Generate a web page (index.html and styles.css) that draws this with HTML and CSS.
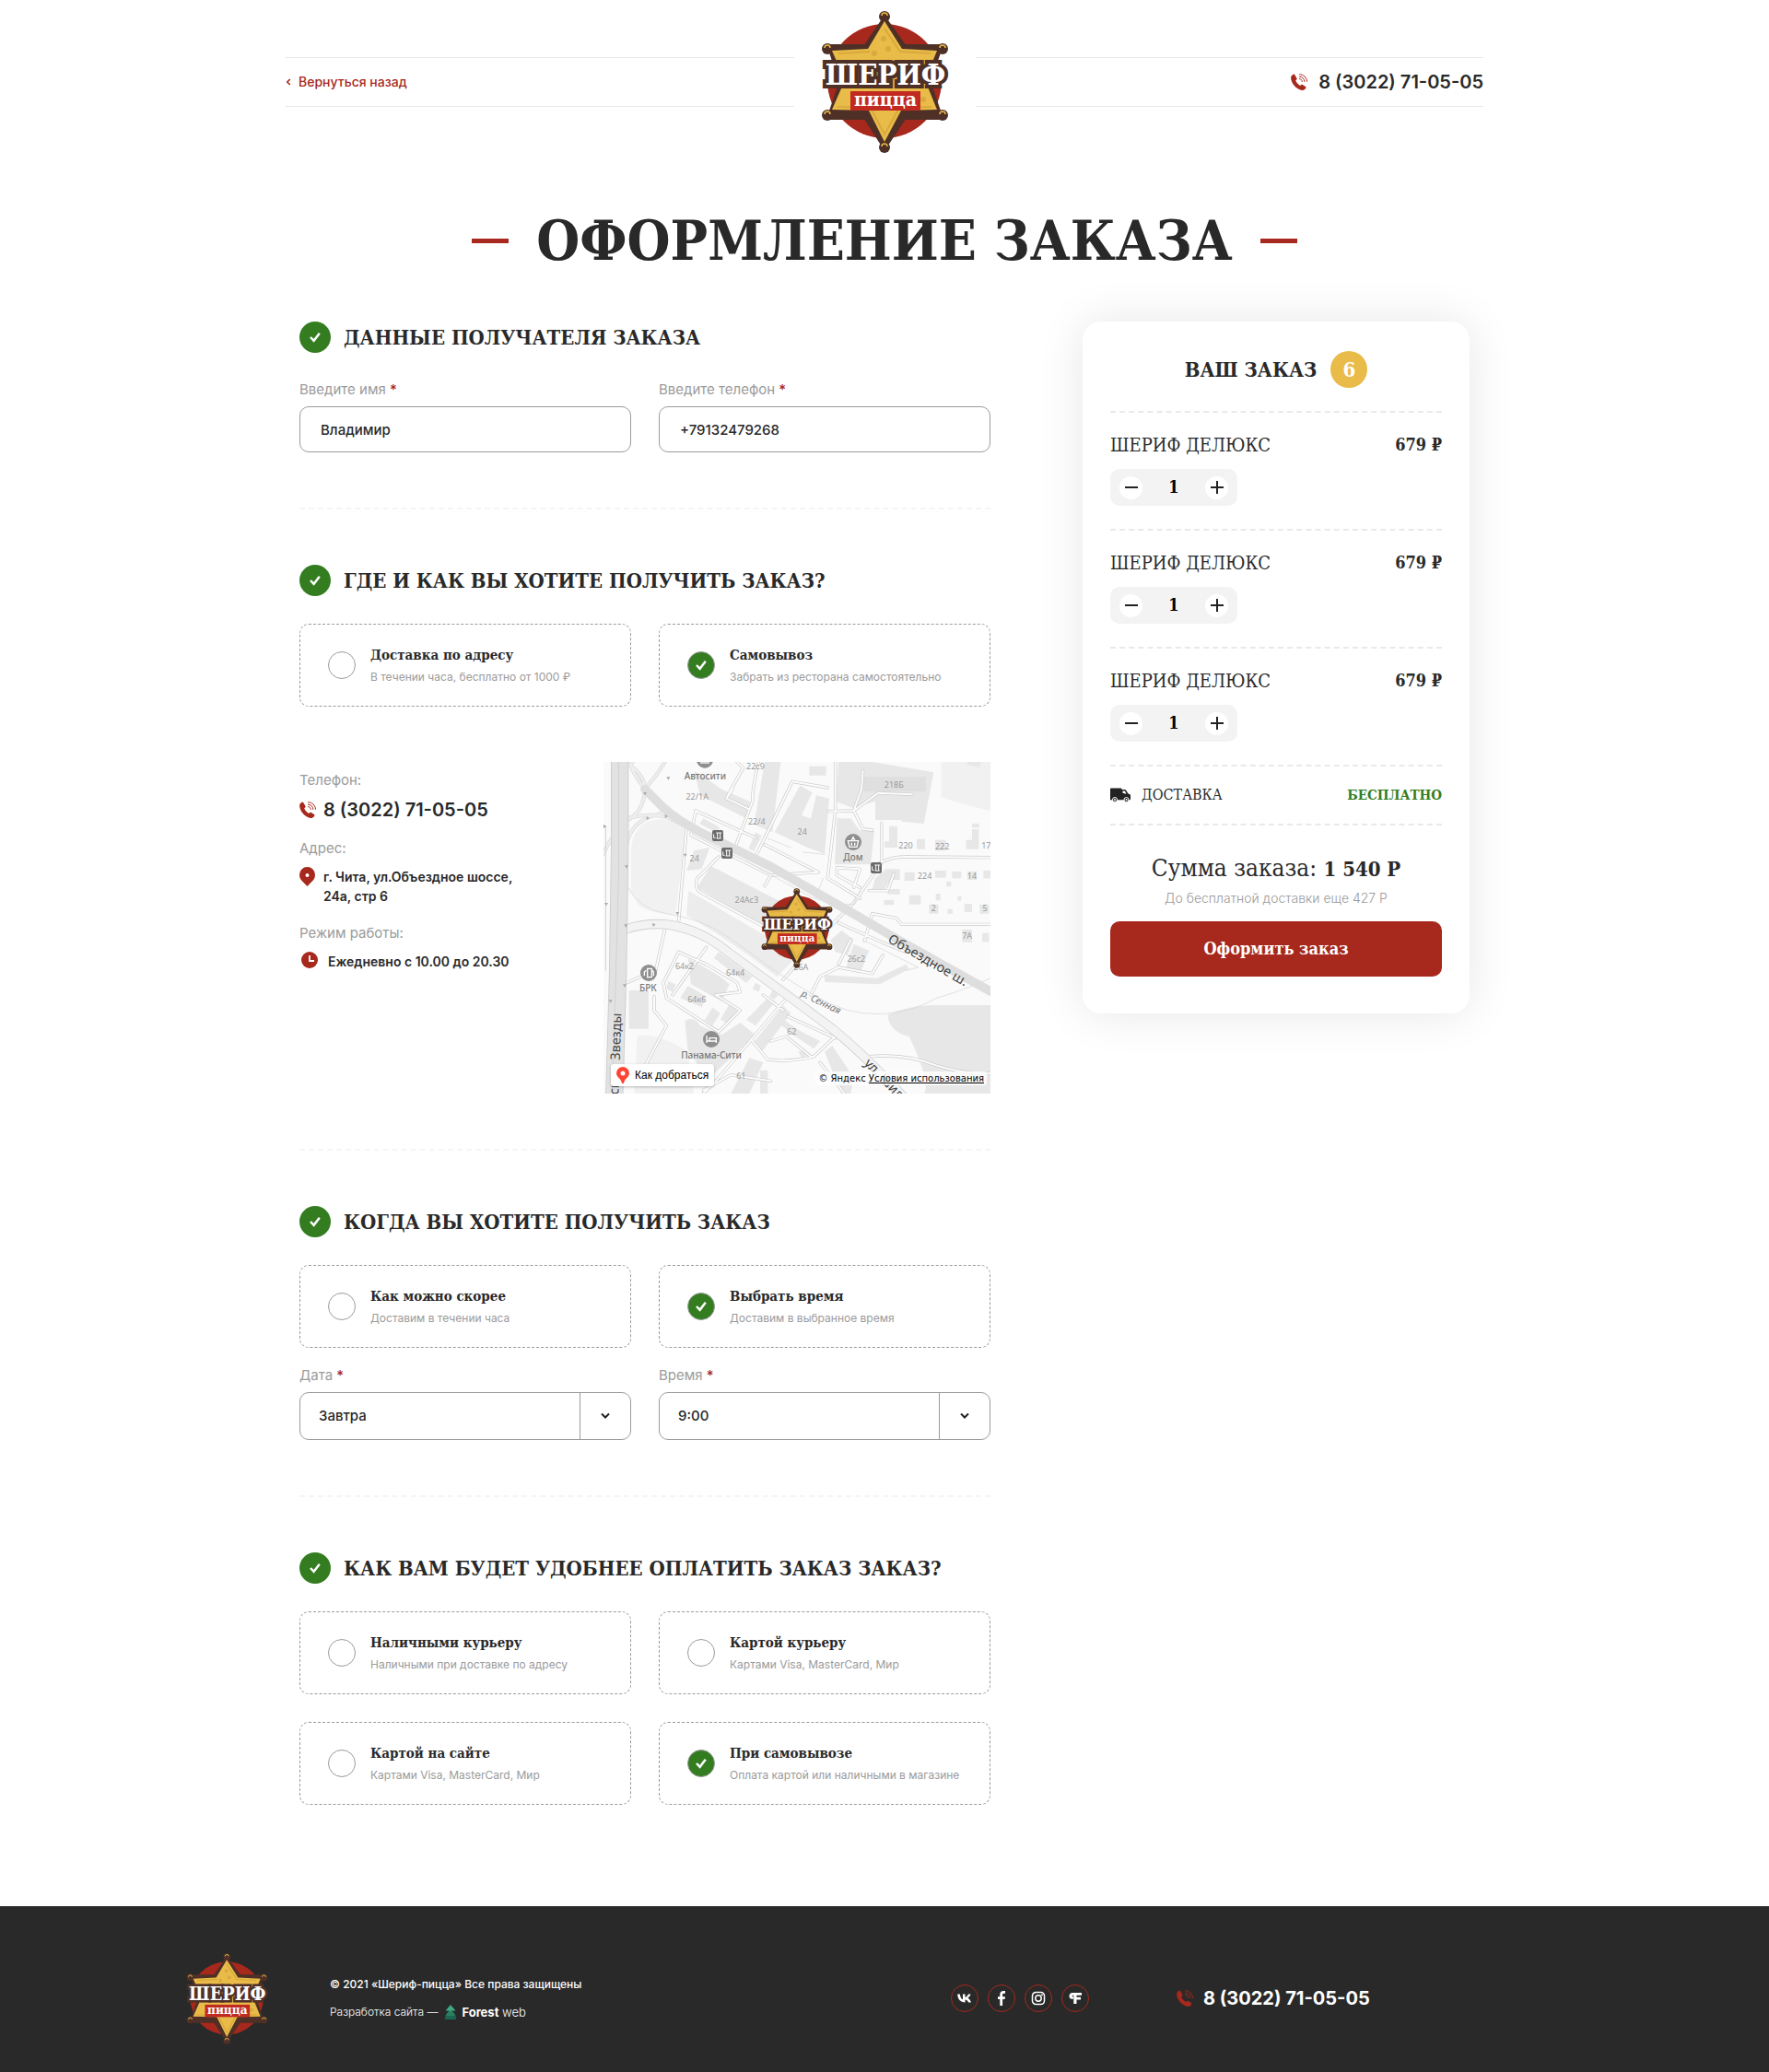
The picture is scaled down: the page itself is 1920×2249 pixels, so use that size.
FILE: index.html
```html
<!DOCTYPE html>
<html lang="ru">
<head>
<meta charset="utf-8">
<meta name="viewport" content="width=device-width, initial-scale=1">
<title>Оформление заказа — Шериф-пицца</title>
<link rel="stylesheet" href="styles.css">
</head>
<body>

<svg class="sprite" aria-hidden="true">
  <symbol id="logo" viewBox="0 0 139 154">
    <circle cx="69" cy="76" r="62" fill="#a7281c"/>
    <g fill="#4f3026">
      <path d="M69 6 91 37 132 37 118 76 132 117 91 117 69 150 48 117 7 117 21 76 7 37 48 37Z" stroke="#4f3026" stroke-width="2" stroke-linejoin="round"/>
      <circle cx="69" cy="6" r="6"/><circle cx="69" cy="148" r="6"/>
      <circle cx="7" cy="41" r="6"/><circle cx="132" cy="41" r="6"/>
      <circle cx="7" cy="113" r="6"/><circle cx="132" cy="113" r="6"/>
    </g>
    <path d="M69 11 88 41 126 43 113 75 126 107 87 108 69 142 52 108 12 107 26 75 12 43 51 41Z" fill="#e9bb48"/>
    <path d="M69 19 86 44 119 46M53 44 19 46M18 104 54 105 69 134 85 105 120 104" fill="none" stroke="#d8a93c" stroke-width="2"/>
    <g fill="#d8a93c"><circle cx="68" cy="30" r="3"/><circle cx="73" cy="41" r="3"/><circle cx="58" cy="46" r="3"/><circle cx="111" cy="96" r="3"/></g>
    <g fill="none" stroke="#e9bb48" stroke-width="1.5">
      <path d="M66 5a3 3 0 0 1 6 0M66 147a3 3 0 0 1 6 0M4 40a3 3 0 0 1 6 0M129 40a3 3 0 0 1 6 0M4 112a3 3 0 0 1 6 0M129 112a3 3 0 0 1 6 0"/>
    </g>
    <text class="logo-name" x="70" y="80" text-anchor="middle">ШЕРИФ</text>
    <rect x="32" y="87" width="76" height="21" fill="#c12a20"/>
    <text class="logo-kind" x="70" y="103" text-anchor="middle">пицца</text>
  </symbol>
  <symbol id="phone" viewBox="0 0 18 18">
    <path fill="#a7281c" d="M4.300 1.200 6.500 5c.3.600.1 1.200-.4 1.600l-.9.700c.9 2.300 2.600 4.200 4.900 5.600l1-.7c.5-.4 1.100-.5 1.700-.1l3.200 2c.5.400.7 1 .3 1.500-1.200 1.900-3 2.900-5.100 2.200C5.200 16 .7 10.700.1 4.800 0 3 .8 1.700 2.700.7c.6-.3 1.300-.1 1.600.5z"/>
    <path fill="none" stroke="#a7281c" stroke-width="1" stroke-linecap="round" d="M9.500.8c4.200-.2 7.800 3.200 8 7.500M9.500 3.200c3 0 5.200 2.200 5.400 5.300M9.500 5.600c1.700.1 2.700 1.200 2.800 2.900"/>
  </symbol>
  <symbol id="check" viewBox="0 0 12 12">
    <path fill="none" stroke="#fff" stroke-width="2.500" d="M1 6 4.600 9.800 10.800 1.800"/>
  </symbol>
</svg>

<header class="header">
  <div class="header__side">
    <a class="back" href="#"><svg width="6" height="8" viewBox="0 0 6 8" aria-hidden="true"><path d="M4.800 1 1.800 4l3 3" fill="none" stroke="currentColor" stroke-width="1.600"/></svg>Вернуться назад</a>
  </div>
  <a class="header__logo" href="#" aria-label="Шериф-пицца"><svg width="139" height="154"><use href="#logo"/></svg></a>
  <div class="header__side header__side--right">
    <a class="phone phone--header" href="tel:+73022710505"><svg width="18" height="18" aria-hidden="true"><use href="#phone"/></svg>8 (3022) 71-05-05</a>
  </div>
</header>

<main>
  <h1 class="title">Оформление заказа</h1>

  <form class="checkout">
    <div class="steps">
      <section class="step">
        <h2 class="step__title"><span class="step__mark"><svg width="12" height="12" aria-hidden="true"><use href="#check"/></svg></span>Данные получателя заказа</h2>
        <div class="pair">
          <div class="field">
            <label for="name">Введите имя <b>*</b></label>
            <input id="name" type="text" value="Владимир">
          </div>
          <div class="field">
            <label for="tel">Введите телефон <b>*</b></label>
            <input id="tel" type="tel" value="+79132479268">
          </div>
        </div>
      </section>

      <section class="step">
        <h2 class="step__title"><span class="step__mark"><svg width="12" height="12" aria-hidden="true"><use href="#check"/></svg></span>Где и как вы хотите получить заказ?</h2>
        <div class="pair">
          <label class="option"><span class="radio"><input type="radio" name="way"><svg width="12" height="12" aria-hidden="true"><use href="#check"/></svg></span><span class="option__text"><strong>Доставка по адресу</strong><small>В течении часа, бесплатно от 1000 ₽</small></span></label>
          <label class="option"><span class="radio"><input type="radio" name="way" checked><svg width="12" height="12" aria-hidden="true"><use href="#check"/></svg></span><span class="option__text"><strong>Самовывоз</strong><small>Забрать из ресторана самостоятельно</small></span></label>
        </div>

        <div class="pickup">
          <dl class="contacts">
            <dt>Телефон:</dt>
            <dd><a class="phone" href="tel:+73022710505"><svg width="18" height="18" aria-hidden="true"><use href="#phone"/></svg>8 (3022) 71-05-05</a></dd>
            <dt>Адрес:</dt>
            <dd class="contacts__row"><svg width="18" height="21" viewBox="0 0 18 21" aria-hidden="true"><path fill="#a7281c" d="M8.500 0a8.500 8.500 0 0 1 8.500 8.500c0 3.600-1.700 5.700-3.600 7.400L8.500 21l-4.900-5.100C1.700 14.200 0 12.100 0 8.500A8.500 8.500 0 0 1 8.500 0z"/><circle cx="8.500" cy="9" r="2" fill="#fff"/></svg><span>г. Чита, ул.Объездное шоссе,<br>24а, стр 6</span></dd>
            <dt>Режим работы:</dt>
            <dd class="contacts__row contacts__row--time"><svg width="18" height="18" viewBox="0 0 18 18" aria-hidden="true"><circle cx="9" cy="9" r="9" fill="#a7281c"/><path d="M9 4v6h5" fill="none" stroke="#fff" stroke-width="1.800"/></svg><span>Ежедневно с 10.00 до 20.30</span></dd>
          </dl>

          <div class="map">
            <svg class="map__canvas" viewBox="15 21 1260 1080" role="img" aria-label="Карта">
              <rect x="15" y="21" width="1260" height="1080" fill="#fafafa"/>
              <g fill="#f1f1f1">
                <path d="M105 300Q120 210 200 208 265 210 282 250L250 515Q180 520 130 490L105 440Z"/>
                <path d="M1115 21H1275V180Q1180 160 1115 135Z"/>
                <path d="M125 912Q200 905 290 965L310 1101H115Z"/>
                <path d="M292 440 650 650 580 720Q440 610 285 520Z" fill="#ececec"/>
              </g>
              <g fill="#e7e7e7">
                <path d="M940 845Q990 820 1080 813H1275V1101H1060Q1080 1060 1010 915 945 900 940 845Z"/>
                <path d="M780 21H890L1090 55 1058 222 985 215V210H900V150L825 170 772 150Z"/>
                <path d="M862 70H1065V118H862Z" fill="#dfdfdf"/>
                <path d="M655 98 695 120 660 195 690 205 708 130 750 140 735 320 680 300 572 250Z"/>
                <path d="M775 205H820L850 245H897L885 355H768Z"/>
                <path d="M540 21H592L565 250 505 225Z"/>
                <path d="M310 50 350 75 400 110 492 150 480 205 330 130Z"/>
                <path d="M365 360 600 480 560 570 320 430Z"/>
                <path d="M310 310 360 300 335 370 285 375Z"/>
                <path d="M340 205 395 235 380 250 328 222ZM510 250 530 262 505 312 488 303Z"/>
                <path d="M755 600 790 570 830 600 810 650 770 640Z"/>
                <path d="M830 615 880 635 850 710 805 690Z"/>
                <path d="M735 715 905 725 1000 680 1010 695 915 745 735 738Z"/>
                <path d="M290 660 345 690 395 720 425 745 400 800 345 770 300 745Z"/>
                <path d="M290 750 350 785 335 820 265 790ZM370 820 395 840 370 880 345 860ZM425 810 450 830 425 875 395 860Z"/>
                <path d="M375 660 390 640 500 720 480 740Z"/>
                <path d="M98 765H162V890H98Z"/>
                <path d="M280 865Q310 845 330 880L400 910 460 870 510 910 355 1055 290 960Z"/>
                <path d="M550 790 575 800 510 880 480 860ZM600 815 625 840 530 965 500 940ZM490 985 535 1000 490 1101H430ZM525 1025H550V1101H525Z"/>
                <path d="M600 860 660 900 720 930 700 955 640 915 595 880ZM650 965 670 955 680 975 660 985Z"/>
                <path d="M735 965 760 945 830 1050 820 1101H790Z"/>
                <path d="M945 230H972V300H930V280H945ZM1035 272H1062V305H1035ZM1195 275H1215V240H1237V305H1195ZM1095 275H1130V310H1095Z"/>
                <path d="M900 400 935 370 980 370V405H950L930 435H890ZM995 380H1028V408H995ZM1095 375H1130V398H1095ZM1150 378H1180V400H1150ZM1200 378H1230V405H1200ZM1252 375H1275V400H1252Z"/>
                <path d="M928 470H960V487H928ZM1010 455H1048V485H1010ZM1097 450H1112V472H1097ZM1168 458H1180V473H1168ZM1132 410H1147V427H1132ZM1075 485H1105V515H1075ZM1135 500H1152V515H1135ZM1190 483H1215V510H1190ZM1240 485H1270V515H1240ZM1183 567H1215V608H1183ZM1248 578H1270V607H1248ZM1215 222H1238V235H1215ZM940 435H980V452H940Z"/>
                <path d="M685 35H740V65H685ZM1200 21H1245L1240 40 1200 30ZM225 735 250 745 240 770 220 760ZM510 740 528 750 520 770 500 760ZM565 765 585 780 570 795 555 785Z"/>
              </g>
              <g fill="none" stroke-linecap="round" stroke-linejoin="round">
                <path d="M520 21Q500 100 500 150L445 295M770 21V180L745 400 850 465M860 50 855 110 830 180 750 182M830 180 860 240 890 243M830 180 910 122 1020 127M630 85 745 105M630 85 510 330M315 180 510 268M315 180 300 260 560 390 715 380M285 240 260 540M540 290 715 380M560 390 540 425M390 330 320 400Q310 430 330 445L560 570M920 220V330 350L830 480 770 540 600 730M865 605 890 515 970 530 985 550H1275M890 370Q930 330 1000 330L1275 332M780 545 925 610 1000 640M925 650 890 710 780 690 720 720 690 780M820 600 780 680M260 640 210 740 220 790 390 900 460 830 380 780 460 770 450 740 350 680 260 640M350 625 240 780M180 785V830L220 880 130 1050M620 780 390 1050 340 1101M500 930 550 990Q620 1000 700 980L775 910M615 850 770 920M535 780 600 830M690 980 610 915 560 930M775 365 850 370 830 430M775 365V390L850 430M215 565 185 700 90 740M420 130 470 40 450 21M435 110 415 140 490 175M880 440 940 440 960 385M885 980Q1000 970 1100 1010 1200 1040 1275 1035M720 1000 800 1101M560 1060 430 1040 340 1090" stroke="#cbcbcb" stroke-width="10"/>
                <path d="M520 21Q500 100 500 150L445 295M770 21V180L745 400 850 465M860 50 855 110 830 180 750 182M830 180 860 240 890 243M830 180 910 122 1020 127M630 85 745 105M630 85 510 330M315 180 510 268M315 180 300 260 560 390 715 380M285 240 260 540M540 290 715 380M560 390 540 425M390 330 320 400Q310 430 330 445L560 570M920 220V330 350L830 480 770 540 600 730M865 605 890 515 970 530 985 550H1275M890 370Q930 330 1000 330L1275 332M780 545 925 610 1000 640M925 650 890 710 780 690 720 720 690 780M820 600 780 680M260 640 210 740 220 790 390 900 460 830 380 780 460 770 450 740 350 680 260 640M350 625 240 780M180 785V830L220 880 130 1050M620 780 390 1050 340 1101M500 930 550 990Q620 1000 700 980L775 910M615 850 770 920M535 780 600 830M690 980 610 915 560 930M775 365 850 370 830 430M775 365V390L850 430M215 565 185 700 90 740M420 130 470 40 450 21M435 110 415 140 490 175M880 440 940 440 960 385M885 980Q1000 970 1100 1010 1200 1040 1275 1035M720 1000 800 1101M560 1060 430 1040 340 1090" stroke="#fcfcfc" stroke-width="6"/>
                <g stroke="#d3d3d3" stroke-width="2">
                  <path d="M95 430Q130 500 220 515 330 530 420 590L600 720 700 780Q800 845 920 842 1010 840 1100 790 1200 760 1275 725"/>
                  <path d="M480 345 690 460Q760 490 830 485L850 440M870 605 1040 690 1000 700M705 465 730 400M550 270 625 300M665 315 735 322"/>
                </g>
                <path d="M90 565Q150 545 220 550 330 565 420 640L640 800 760 890Q860 970 1000 1120" stroke="#d0d0d0" stroke-width="31"/>
                <path d="M90 565Q150 545 220 550 330 565 420 640L640 800 760 890Q860 970 1000 1120" stroke="#f3f3f3" stroke-width="26"/>
                <path d="M85 21Q150 60 150 110 145 190 85 215M150 110Q90 30 110 21M150 110 190 60 215 21M88 205Q200 180 250 215M88 300Q100 210 200 190M15 320Q40 260 88 220" stroke="#d4d4d4" stroke-width="12"/>
                <path d="M85 21Q150 60 150 110 145 190 85 215M150 110Q90 30 110 21M150 110 190 60 215 21M88 205Q200 180 250 215M88 300Q100 210 200 190M15 320Q40 260 88 220" stroke="#ededed" stroke-width="9"/>
                <path d="M150 110 210 170Q260 215 340 255L560 362 820 510 1000 615 1275 768" stroke="#dedede" stroke-width="29"/>
                <path d="M68 10V300L62 700 50 1120" stroke="#cbcbcb" stroke-width="58" stroke-linecap="butt"/>
                <path d="M68 10V300L62 700 50 1120" stroke="#e2e2e2" stroke-width="53" stroke-linecap="butt"/>
                <path d="M64 10V400L44 1120M22 230V700" stroke="#d2d2d2" stroke-width="3"/>
              </g>
              <g fill="#aaa"><path d="M144 120h12l-6 10ZM215 192v12l10-6ZM250 510h12l-6 10ZM84 358h12l-6 10ZM18 480h12l-6 10ZM82 550h12l-6 10ZM32 796h12l-6 10ZM78 745h12l-6 10ZM175 545v12l10-6ZM155 198v12l10-6ZM15 225v12l10-6ZM220 70h12l-6 10ZM275 320h12l-6 10Z"/></g>
              <g class="map__poi">
                <circle cx="345" cy="14" r="27"/><circle cx="828" cy="282" r="27"/><circle cx="162" cy="708" r="27"/><circle cx="366" cy="924" r="27"/>
              </g>
              <g fill="none" stroke="#fff" stroke-width="4">
                <path d="M330 24h30"/>
                <path d="M811 278h34l-5 20h-24ZM822 278l6-12 6 12M823 284v10M833 284v10"/>
                <path d="M158 722V694h14v28ZM172 698l6 6v14M154 700l-6 5v12"/>
                <path d="M351 912v24M351 930h31v6M382 930v-10h-22v8"/>
              </g>
              <g fill="#6b6b6b"><rect x="369" y="243" width="36" height="36" rx="6"/><rect x="399" y="300" width="36" height="36" rx="6"/><rect x="885" y="348" width="36" height="36" rx="6"/></g>
              <path fill="none" stroke="#fff" stroke-width="3" d="M382 252h18M386 252v18M395 252v18M383 270h15M374 256v12h6M412 309h18M416 309v18M425 309v18M413 327h15M404 313v12h6M898 357h18M902 357v18M911 357v18M899 375h15M890 361v12h6"/>
              <g class="map__num">
                <text x="510" y="46">22с9</text><text x="320" y="144">22/1А</text><text x="514" y="224">22/4</text><text x="662" y="257">24</text>
                <text x="311" y="344">24</text><text x="961" y="105">218Б</text><text x="999" y="304">220</text><text x="1118" y="305">222</text><text x="1261" y="303">17</text>
                <text x="1061" y="401">224</text><text x="1215" y="401">14</text><text x="1090" y="507">2</text><text x="1257" y="507">5</text><text x="1199" y="596">7А</text>
                <text x="481" y="479">24Ас3</text><text x="838" y="672">26с2</text><text x="658" y="699">26А</text><text x="279" y="695">64к2</text><text x="444" y="716">64к4</text>
                <text x="319" y="804">64к6</text><text x="628" y="908">62</text><text x="463" y="1054">61</text>
              </g>
              <g class="map__name">
                <text x="346" y="79">Автосити</text><text x="828" y="342">Дом</text><text x="160" y="768">БРК</text><text x="366" y="986">Панама-Сити</text>
              </g>
              <text class="map__river" transform="translate(656 782) rotate(26)">р. Сенная</text>
              <g class="map__street">
                <text transform="translate(938 606) rotate(30)">Объездное ш.</text>
                <text transform="translate(862 1004) rotate(46)">ул. Шил</text>
                <text transform="translate(68 992) rotate(-88)">Звезды</text>
                <text transform="translate(64 1105) rotate(-88)">ская</text>
              </g>
              <use href="#logo" x="528" y="432" width="234" height="261"/>
            </svg>
            <button class="map__route" type="button"><svg width="14" height="18" viewBox="0 0 14 18" aria-hidden="true"><path fill="#f43" d="M7 0a7 7 0 0 1 7 7c0 4-4.500 5-6 10.500a1 1 0 0 1-2 0C4.500 12 0 11 0 7a7 7 0 0 1 7-7z"/><circle cx="7" cy="7" r="2.500" fill="#fff"/></svg>Как добраться</button>
            <span class="map__copy">© Яндекс <a href="#">Условия использования</a></span>
          </div>
        </div>
      </section>

      <section class="step">
        <h2 class="step__title"><span class="step__mark"><svg width="12" height="12" aria-hidden="true"><use href="#check"/></svg></span>Когда вы хотите получить заказ</h2>
        <div class="pair">
          <label class="option"><span class="radio"><input type="radio" name="when"><svg width="12" height="12" aria-hidden="true"><use href="#check"/></svg></span><span class="option__text"><strong>Как можно скорее</strong><small>Доставим в течении часа</small></span></label>
          <label class="option"><span class="radio"><input type="radio" name="when" checked><svg width="12" height="12" aria-hidden="true"><use href="#check"/></svg></span><span class="option__text"><strong>Выбрать время</strong><small>Доставим в выбранное время</small></span></label>
        </div>
        <div class="pair pair--time">
          <div class="field">
            <label for="date">Дата <b>*</b></label>
            <div class="select">
              <select id="date"><option>Завтра</option></select>
              <span class="select__arrow"><svg width="10" height="8" viewBox="0 0 10 8" aria-hidden="true"><path d="M1 1.500l4 4 4-4" fill="none" stroke="#222" stroke-width="2"/></svg></span>
            </div>
          </div>
          <div class="field">
            <label for="time">Время <b>*</b></label>
            <div class="select">
              <select id="time"><option>9:00</option></select>
              <span class="select__arrow"><svg width="10" height="8" viewBox="0 0 10 8" aria-hidden="true"><path d="M1 1.500l4 4 4-4" fill="none" stroke="#222" stroke-width="2"/></svg></span>
            </div>
          </div>
        </div>
      </section>

      <section class="step">
        <h2 class="step__title"><span class="step__mark"><svg width="12" height="12" aria-hidden="true"><use href="#check"/></svg></span>Как вам будет удобнее оплатить заказ заказ?</h2>
        <div class="pair">
          <label class="option"><span class="radio"><input type="radio" name="pay"><svg width="12" height="12" aria-hidden="true"><use href="#check"/></svg></span><span class="option__text"><strong>Наличными курьеру</strong><small>Наличными при доставке по адресу</small></span></label>
          <label class="option"><span class="radio"><input type="radio" name="pay"><svg width="12" height="12" aria-hidden="true"><use href="#check"/></svg></span><span class="option__text"><strong>Картой курьеру</strong><small>Картами Visa, MasterCard, Мир</small></span></label>
          <label class="option"><span class="radio"><input type="radio" name="pay"><svg width="12" height="12" aria-hidden="true"><use href="#check"/></svg></span><span class="option__text"><strong>Картой на сайте</strong><small>Картами Visa, MasterCard, Мир</small></span></label>
          <label class="option"><span class="radio"><input type="radio" name="pay" checked><svg width="12" height="12" aria-hidden="true"><use href="#check"/></svg></span><span class="option__text"><strong>При самовывозе</strong><small>Оплата картой или наличными в магазине</small></span></label>
        </div>
      </section>
    </div>

    <aside class="order">
      <h2 class="order__title">Ваш заказ <span class="order__count">6</span></h2>
      <ul class="order__list">
        <li class="item">
          <div class="item__line"><span>Шериф Делюкс</span><b>679 ₽</b></div>
          <div class="counter"><button type="button" aria-label="Меньше"><svg width="14" height="14" viewBox="0 0 14 14"><path d="M0 7h14" stroke="#222" stroke-width="2"/></svg></button><output>1</output><button type="button" aria-label="Больше"><svg width="14" height="14" viewBox="0 0 14 14"><path d="M0 7h14M7 0v14" stroke="#222" stroke-width="2"/></svg></button></div>
        </li>
        <li class="item">
          <div class="item__line"><span>Шериф Делюкс</span><b>679 ₽</b></div>
          <div class="counter"><button type="button" aria-label="Меньше"><svg width="14" height="14" viewBox="0 0 14 14"><path d="M0 7h14" stroke="#222" stroke-width="2"/></svg></button><output>1</output><button type="button" aria-label="Больше"><svg width="14" height="14" viewBox="0 0 14 14"><path d="M0 7h14M7 0v14" stroke="#222" stroke-width="2"/></svg></button></div>
        </li>
        <li class="item">
          <div class="item__line"><span>Шериф Делюкс</span><b>679 ₽</b></div>
          <div class="counter"><button type="button" aria-label="Меньше"><svg width="14" height="14" viewBox="0 0 14 14"><path d="M0 7h14" stroke="#222" stroke-width="2"/></svg></button><output>1</output><button type="button" aria-label="Больше"><svg width="14" height="14" viewBox="0 0 14 14"><path d="M0 7h14M7 0v14" stroke="#222" stroke-width="2"/></svg></button></div>
        </li>
      </ul>
      <div class="delivery">
        <svg width="22" height="16" viewBox="0 0 22 16" aria-hidden="true"><path fill="#222" d="M0 1.500Q0 .5 1 .5h10.500q1 0 1 1V2h3.200q1 0 1.600.9l2 3.300 2 1q.7.500.7 1.300v4q0 .8-.8.800H0z"/><path fill="#fff" d="M13.500 3.500h2.300l1.800 3.200-4.100-.9z"/><circle cx="5" cy="13" r="2.500" fill="#222" stroke="#fff"/><circle cx="17.500" cy="13" r="2.500" fill="#222" stroke="#fff"/><circle cx="5" cy="13" r="1" fill="#fff"/><circle cx="17.500" cy="13" r="1" fill="#fff"/></svg>
        <span>Доставка</span><b>Бесплатно</b>
      </div>
      <p class="order__sum">Сумма заказа: <b>1 540 Р</b></p>
      <p class="order__hint">До бесплатной доставки еще 427 Р</p>
      <button class="order__submit" type="submit">Оформить заказ</button>
    </aside>
  </form>
</main>

<footer class="footer">
  <div class="footer__inner">
    <a class="footer__logo" href="#" aria-label="Шериф-пицца"><svg width="89" height="99"><use href="#logo"/></svg></a>
    <div class="footer__legal">
      <p>© 2021 «Шериф-пицца» Все права защищены</p>
      <p class="dev">Разработка сайта — <a href="#"><svg width="12" height="16" viewBox="0 0 12 16" aria-hidden="true"><path fill="#1c6650" d="M2 9h8l2 4.500V16H0v-2.500z"/><path fill="#27805f" d="M6 4l5.500 8H.5z"/><path fill="#3ea982" d="M6 0l5.500 6.500H.5z"/></svg><span><b>Forest</b> web</span></a></p>
    </div>
    <nav class="social" aria-label="Социальные сети">
      <a href="#" aria-label="ВКонтакте"><svg width="16" height="16" viewBox="0 0 16 16"><path fill="#fff" d="M8.700 12.600C3.400 12.600.4 9 .2 3.600h2.700c.1 3.600 1.800 5.400 3.100 5.700V3.600h2.500v3.300c1.400-.2 2.900-1.700 3.400-3.300h2.600c-.4 2-2.100 3.500-3.200 4.200 1.100.6 3 1.900 3.700 4.800h-2.800c-.6-1.600-1.900-2.900-3.700-3.100v3.100z"/></svg></a>
      <a href="#" aria-label="Facebook"><svg width="16" height="16" viewBox="0 0 16 16"><path fill="#fff" d="M6.300 16V9H4V6.200h2.300V4.100C6.300 1.500 7.800 0 10.200 0H12v2.700h-1.400c-1.100 0-1.500.5-1.500 1.400v2.100H12L11.500 9H9.100v7z"/></svg></a>
      <a href="#" aria-label="Instagram"><svg width="16" height="16" viewBox="0 0 16 16" fill="none" stroke="#fff" stroke-width="1.500"><rect x="1.500" y="1.500" width="13" height="13" rx="3.800"/><circle cx="8" cy="8" r="3.200"/><path d="M11.500 4.300h.8" stroke-linecap="round"/></svg></a>
      <a href="#" aria-label="Flamp"><svg width="16" height="16" viewBox="0 0 16 16"><path fill="#fff" d="M15 2v2.700H9.500v2.100H14v2.600H9.500V14H6.300V4.700H4.900v1.600h1v2.400H4C2.400 8.700 1.500 7.500 1.500 5.500 1.500 3.400 3 2 5 2z"/></svg></a>
    </nav>
    <a class="phone phone--footer" href="tel:+73022710505"><svg width="18" height="18" aria-hidden="true"><use href="#phone"/></svg>8 (3022) 71-05-05</a>
  </div>
</footer>
</body>
</html>
```
FILE: styles.css
```css
:root {
  --ink: #292929;
  --muted: #9b9b9b;
  --red: #a7281c;
  --green: #337d20;
  --gold: #e9bb48;
  --slab: "Roboto Slab", "DejaVu Serif Condensed", "DejaVu Serif", serif;
  --sans: Inter, "Liberation Sans", sans-serif;
}

* { box-sizing: border-box; }

body {
  margin: 0;
  color: var(--ink);
  background: #fff;
  font: 14px/20px var(--sans);
}

h1, h2, p, ul, dl, dd { margin: 0; padding: 0; }
ul { list-style: none; }
a { color: inherit; text-decoration: none; }
button, input, select { font: inherit; color: inherit; }
svg { display: block; flex: none; }
.sprite { display: none; }

.logo-name {
  font: 700 31px var(--slab);
  fill: #fff;
  stroke: #4f3026;
  stroke-width: 8px;
  paint-order: stroke;
}
.logo-kind { font: 700 21px var(--slab); fill: #fff; }

/* Header */
.header {
  display: grid;
  grid-template-columns: 1fr 197px 1fr;
  align-items: center;
  max-width: 1300px;
  margin: 0 auto;
  padding-top: 12px;
}
.header__side {
  display: flex;
  align-items: center;
  height: 54px;
  border: solid #e7e7e7;
  border-width: 1px 0;
}
.header__side--right { justify-content: flex-end; }
.header__logo { justify-self: center; }
.back {
  display: flex;
  align-items: center;
  gap: 8px;
  color: var(--red);
  font-weight: 500;
}
.phone {
  display: flex;
  align-items: center;
  gap: 8px;
  font-size: 20px;
  line-height: 24px;
  font-weight: 600;
}
.phone--header { gap: 12px; }

.title {
  display: flex;
  justify-content: center;
  align-items: center;
  gap: 30px;
  margin: 55px 0 48px;
  font: 600 60px/80px var(--slab);
  text-transform: uppercase;
}
.title::before, .title::after {
  content: "";
  width: 40px;
  height: 5px;
  background: var(--red);
}

/* Checkout layout */
.checkout {
  display: grid;
  grid-template-columns: minmax(0, 750px) 420px;
  justify-content: space-between;
  align-items: start;
  max-width: 1270px;
  margin: 0 auto 110px;
}
.step + .step {
  margin-top: 60px;
  padding-top: 60px;
  border-top: 2px dashed #f5f5f5;
}
.step__title {
  display: flex;
  align-items: center;
  gap: 14px;
  margin-bottom: 30px;
  font: 700 22px/34px var(--slab);
  text-transform: uppercase;
}
.step__mark {
  display: grid;
  place-items: center;
  width: 34px;
  height: 34px;
  border-radius: 50%;
  background: var(--green);
}
.pair {
  display: grid;
  grid-template-columns: 1fr 1fr;
  gap: 30px;
}
.pair--time { margin-top: 20px; }

.field label {
  display: block;
  margin-bottom: 8px;
  color: var(--muted);
  font-size: 15px;
}
.field b { color: var(--red); font-weight: 500; }
.field input {
  display: block;
  width: 100%;
  height: 50px;
  padding: 0 22px;
  border: 1px solid var(--muted);
  border-radius: 10px;
  font-size: 15px;
  font-weight: 500;
}
.select {
  display: grid;
  grid-template-columns: 1fr 55px;
  height: 52px;
  border: 1px solid var(--muted);
  border-radius: 10px;
}
.select select {
  grid-area: 1 / 1 / 2 / 3;
  padding: 0 20px;
  border: 0;
  border-radius: 10px;
  background: none;
  appearance: none;
  font-size: 15px;
  font-weight: 500;
}
.select__arrow {
  grid-area: 1 / 2;
  display: grid;
  place-items: center;
  border-left: 1px solid var(--muted);
  pointer-events: none;
}

.option {
  display: flex;
  align-items: center;
  gap: 16px;
  height: 90px;
  padding: 0 30px;
  border: 1px dashed var(--muted);
  border-radius: 10px;
}
.radio { display: grid; place-items: center; }
.radio > * { grid-area: 1 / 1; }
.radio input {
  width: 30px;
  height: 30px;
  margin: 0;
  border: 1px solid var(--muted);
  border-radius: 50%;
  appearance: none;
}
.radio svg { display: none; pointer-events: none; }
.radio input:checked { background: var(--green); }
.radio input:checked + svg { display: block; }
.option__text { display: grid; gap: 4px; padding-top: 2px; }
.option strong { font: 600 15px/20px var(--slab); }
.option small { color: var(--muted); font-size: 12px; }

/* Pickup point */
.pickup {
  display: grid;
  grid-template-columns: 1fr 420px;
  margin-top: 60px;
}
.contacts { padding-top: 10px; }
.contacts dt {
  margin-bottom: 10px;
  color: var(--muted);
  font-size: 15px;
}
.contacts dd { margin-bottom: 20px; }
.contacts__row {
  display: flex;
  gap: 8px;
  font-weight: 600;
  line-height: 21px;
}
.contacts__row--time { padding-left: 2px; gap: 11px; }

.map { position: relative; }
.map__canvas { width: 100%; height: auto; }
.map__canvas text { font-family: "Noto Sans", sans-serif; }
.map__poi { fill: #8f8f8f; }
.map__num { font-size: 27px; fill: #999; text-anchor: middle; }
.map__name { font-size: 30px; fill: #777; text-anchor: middle; font-weight: 500; }
.map__river { font-size: 32px; font-style: italic; fill: #777; }
.map__street { font-size: 43px; fill: #444; }
.map__route {
  position: absolute;
  left: 8px;
  bottom: 8px;
  display: flex;
  align-items: center;
  gap: 6px;
  height: 24px;
  padding: 0 6px;
  border: 0;
  border-radius: 3px;
  background: #fff;
  box-shadow: 0 1px 3px #0004;
  color: #000;
  font: 12px/24px "Liberation Sans", sans-serif;
}
.map__copy {
  position: absolute;
  right: 4px;
  bottom: 9px;
  padding: 0 3px;
  border-radius: 3px;
  background: #fffc;
  color: #000;
  font: 10px/15px "DejaVu Sans", sans-serif;
}
.map__copy a { text-decoration: underline; }

/* Order card */
.order {
  padding: 32px 30px 40px;
  border-radius: 20px;
  background: #fff;
  box-shadow: 0 0 50px #0000001a;
}
.order__title {
  display: flex;
  justify-content: center;
  align-items: center;
  gap: 15px;
  margin-bottom: 25px;
  font: 700 22px/40px var(--slab);
  text-transform: uppercase;
}
.order__count {
  width: 40px;
  border-radius: 50%;
  background: var(--gold);
  color: #fff;
  text-align: center;
}
.item, .delivery { border-top: 2px dashed #e9e9e9; }
.item { padding: 22px 0 25px; }
.item__line {
  display: flex;
  justify-content: space-between;
  margin-bottom: 13px;
  font: 400 20px/26px var(--slab);
}
.item__line span { text-transform: uppercase; }
.item__line b { font-size: 18px; font-weight: 700; }
.counter {
  display: flex;
  justify-content: space-between;
  align-items: center;
  width: 138px;
  height: 40px;
  padding: 0 10px;
  border-radius: 10px;
  background: #f3f3f3;
  color: #000;
  font: 700 18px/24px var(--slab);
}
.counter button {
  display: grid;
  place-items: center;
  width: 25px;
  height: 25px;
  padding: 0;
  border: 0;
  border-radius: 50%;
  background: #fff;
}
.delivery {
  display: flex;
  align-items: center;
  gap: 12px;
  height: 66px;
  border-bottom: 2px dashed #e9e9e9;
  font: 300 16px/24px var(--slab);
  text-transform: uppercase;
}
.delivery b {
  margin-left: auto;
  color: var(--green);
  font-size: 15px;
  font-weight: 700;
}
.order__sum {
  padding-top: 28px;
  text-align: center;
  font: 300 26px/36px var(--slab);
}
.order__sum b { font-size: 22px; font-weight: 700; }
.order__hint {
  margin: 4px 0 15px;
  color: var(--muted);
  text-align: center;
  font-weight: 300;
}
.order__submit {
  display: block;
  width: 100%;
  height: 60px;
  border: 0;
  border-radius: 10px;
  background: var(--red);
  color: #fff;
  font: 800 18px/24px var(--slab);
}

/* Footer */
.footer { background: var(--ink); color: #fff; }
.footer__inner {
  display: grid;
  grid-template-columns: 156px 1fr 245px 441px;
  align-items: center;
  max-width: 1516px;
  height: 180px;
  margin: 0 auto;
  padding-top: 20px;
}
.footer__legal { display: grid; gap: 10px; font-size: 12px; font-weight: 500; }
.dev, .dev a { display: flex; align-items: center; gap: 8px; }
.dev { font-weight: 300; }
.dev a { gap: 6px; font-size: 13px; }
.dev b { font-weight: 700; }
.social { display: flex; gap: 10px; }
.social a {
  display: grid;
  place-items: center;
  width: 30px;
  height: 30px;
  border: 1px solid var(--red);
  border-radius: 50%;
}
.phone--footer { gap: 11px; font-weight: 700; }
```
